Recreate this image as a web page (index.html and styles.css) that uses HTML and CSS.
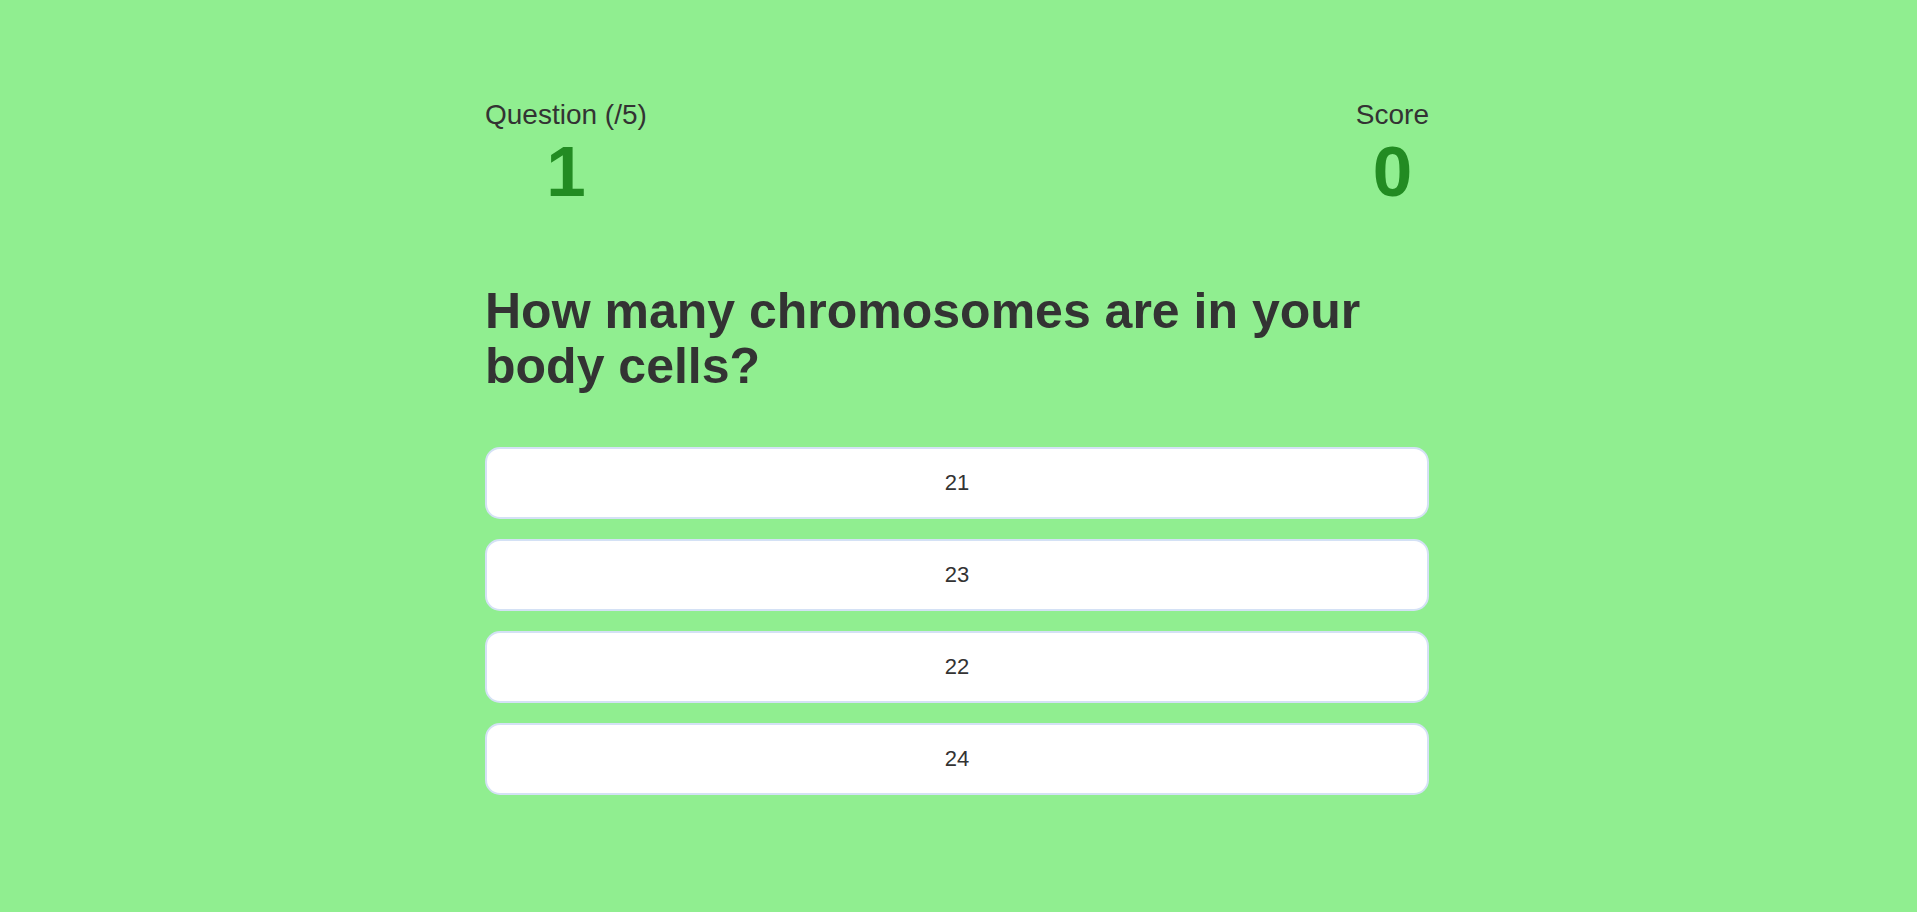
FILE: index.html
```html
<!DOCTYPE html>
<html lang="en">
<head>
<meta charset="utf-8">
<title>Quiz</title>
<link rel="stylesheet" href="styles.css">
</head>
<body>
<div class="container">
  <div class="hud">
    <div class="stat">
      <p class="stat-label">Question (/5)</p>
      <h1 class="stat-value">1</h1>
    </div>
    <div class="stat">
      <p class="stat-label">Score</p>
      <h1 class="stat-value">0</h1>
    </div>
  </div>
  <h2 class="question">How many chromosomes are in your body cells?</h2>
  <div class="choices">
    <button class="choice">21</button>
    <button class="choice">23</button>
    <button class="choice">22</button>
    <button class="choice">24</button>
  </div>
</div>
</body>
</html>
```

FILE: styles.css
```css
* {
  box-sizing: border-box;
}

body {
  margin: 0;
  background: #90ee90;
  font-family: "Liberation Sans", Arial, sans-serif;
  color: #333;
}

.container {
  width: 947px;
  margin: 0 auto;
  padding: 99px 3px 0 0;
}

.hud {
  display: flex;
  justify-content: space-between;
}

.stat {
  display: flex;
  flex-direction: column;
  align-items: center;
}

.stat-label {
  margin: 0;
  font-size: 28px;
  line-height: 32px;
}

.stat-value {
  margin: 6px 0 0;
  font-size: 71px;
  line-height: 70px;
  font-weight: 700;
  color: #228b22;
}

.question {
  margin: 77px 0 0;
  font-size: 50px;
  line-height: 55px;
  font-weight: 700;
}

.choices {
  display: flex;
  flex-direction: column;
  gap: 20px;
  margin-top: 53px;
}

.choice {
  height: 72px;
  width: 100%;
  background: #fff;
  border: 2px solid #d4e1f5;
  border-radius: 15px;
  font-family: "Liberation Sans", Arial, sans-serif;
  font-size: 22px;
  color: #333;
  cursor: pointer;
}
```
